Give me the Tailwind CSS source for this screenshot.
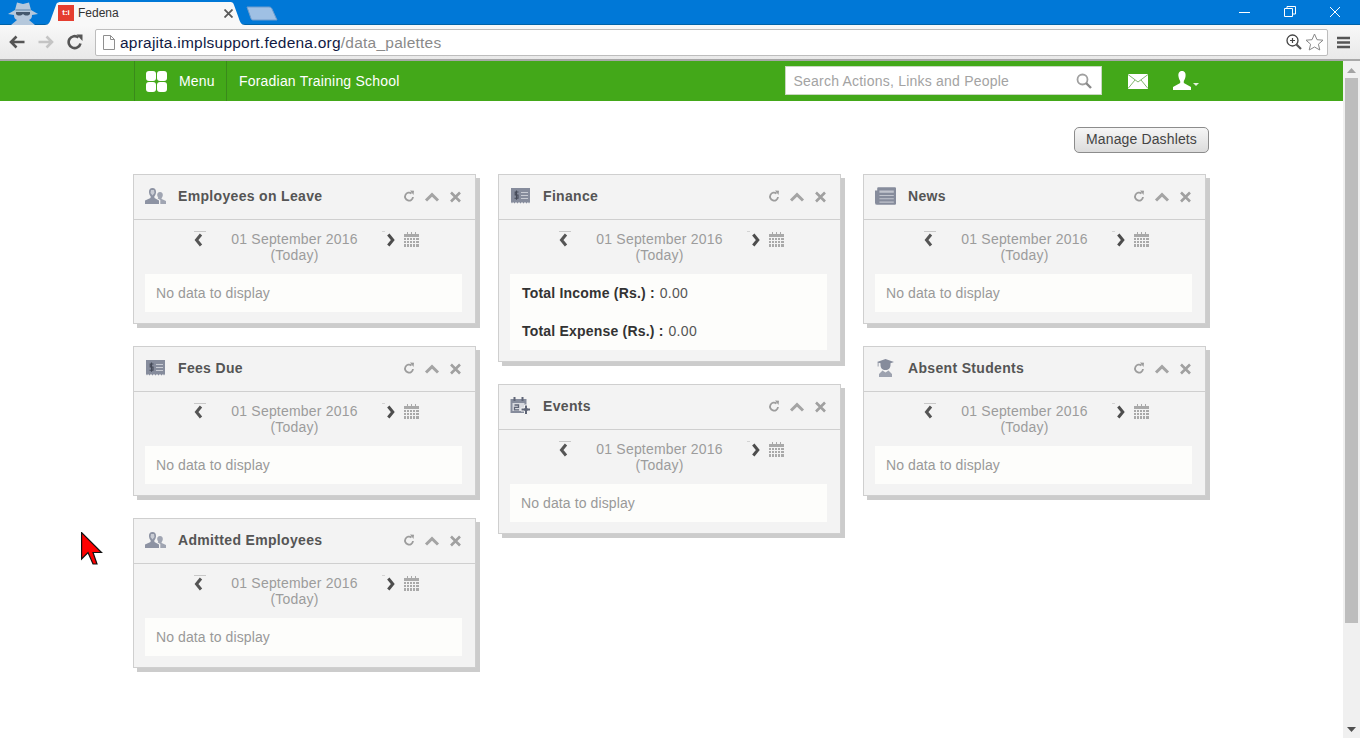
<!DOCTYPE html>
<html><head><meta charset="utf-8"><title>Fedena</title>
<script src="https://cdn.jsdelivr.net/npm/@tailwindcss/browser@4"></script></head>
<body class="h-[738px] w-[1360px] overflow-hidden bg-white font-['Liberation_Sans',Arial,sans-serif]">
<svg class="hidden"><defs>
<symbol id="people" viewBox="0 0 21 18"><path fill="#8d93a3" d="M7.500 1C10 1 11.300 3 11 5.500C10.800 7.500 10 8.700 9.300 9.500L9.500 11L14 13.500V17H0V13.500L5.500 11L5.700 9.500C5 8.700 4.200 7.500 4 5.500C3.700 3 5 1 7.500 1Z"/><path fill="#c9ccd4" d="M6 3H9L9.500 6L7.500 8.500L5.500 6Z"/><path fill="#a0a5b2" d="M15 5C17 5 18 6.500 17.800 8.300C17.700 9.700 17 10.600 16.500 11.200L16.700 12L21 14V17H15.300V13L12.700 11.500C13.300 10.600 13 10.800 13.200 10.500C12.700 9.800 12.300 9.200 12.200 8.300C12 6.500 13 5 15 5Z"/></symbol>
<symbol id="money" viewBox="0 0 19 18"><path fill="#868c9c" d="M0 1H19V15L18 16.500L17 15L15.500 16.500L14 15L12.500 16.500L11 15L9.500 16.500L8 15L6.500 16.500L5 15L3.500 16.500L2 15L1 16.500L0 15Z"/><path fill="#c8cbd3" d="M10 5H17V6H10ZM10 8H17V9H10ZM10 11H17V12H10Z"/><path fill="none" stroke="#454a58" stroke-width="1.100" d="M7.500 5H4.200V8H7V11.300H3.500M5.500 3.500V12.800"/></symbol>
<symbol id="events" viewBox="0 0 20 18"><path fill="#868c9c" d="M0 2H16V16H0Z"/><path fill="#d8dae0" d="M2 6H14V14H2Z"/><path fill="#5f6576" d="M3 0H5V4H3ZM11 0H13V4H11Z"/><path fill="none" stroke="#5f6576" stroke-width="1.300" d="M4 8H8V10.300H4V12.800H8.500"/><path fill="#5f6576" stroke="#f3f3f3" stroke-width="1" d="M14 8H17V11H20V14H17V17.500H14V14H10.500V11H14Z"/></symbol>
<symbol id="news" viewBox="0 0 19 16"><path fill="#868c9c" d="M2 1Q2 0 3 0H18Q19 0 19 1V15Q19 16 18 16H2Q0 16 0 14V3H2Z"/><path fill="#c1c4cd" d="M4 3H17V5H4ZM4 7H17V8H4ZM4 10H17V11H4ZM4 13H17V14H4Z"/></symbol>
<symbol id="student" viewBox="0 0 17 18"><path fill="#868c9c" d="M0 3L8.500 0L17 3L13.500 4.300V6C13.500 9 11.500 11 8.500 11C5.500 11 3.500 9 3.500 6V4.300L1.500 3.700V7.500H.7V3.300Z"/><path fill="#9da2af" d="M5.500 11.500L8.500 13.500L11.500 11.500L15 15V18H2V15Z"/></symbol>
<symbol id="card-tools" viewBox="0 0 58 14"><path fill="none" stroke="#9c9c9c" stroke-width="1.800" d="M8.500 3.500A4 4 0 1 0 10 7"/><path fill="#9c9c9c" d="M7 .5L11 .8L10.500 5Z"/><path fill="none" stroke="#a4a4a4" stroke-width="3" d="M23 10.500L29 4.700L35 10.500"/><path fill="none" stroke="#a0a0a0" stroke-width="2.600" d="M48 2.500L57 11.500M57 2.500L48 11.500"/></symbol>
<symbol id="prev" viewBox="0 0 12 18"><path fill="#c8c8c8" d="M0 0H12V1H0Z"/><path fill="none" stroke="#555" stroke-width="3" d="M7 3.500L2.500 9L7 14.500"/></symbol>
<symbol id="next" viewBox="0 0 14 18"><path fill="#d4d4d4" d="M0 0H3V1H0Z"/><path fill="none" stroke="#4d4d4d" stroke-width="3" d="M6.300 3.500L10.800 9L6.300 14.500"/></symbol>
<symbol id="cal" viewBox="0 0 15 15"><path fill="#a9a9a9" d="M0 2H15V15H0Z"/><path fill="#a9a9a9" d="M3 0H4V3H3ZM7 0H8V3H7ZM11 0H12V3H11Z"/><path fill="none" stroke="#f3f3f3" d="M0 5.500H15M0 8.500H15M0 11.500H15M2.500 5V15M5.500 5V15M8.500 5V15M11.500 5V15"/></symbol>
</defs></svg>

<div class="flex h-[25px] items-start bg-[#0078d7] border-b border-[#0063a9]">
  <svg class="mt-px ml-[5px] shrink-0" width="36" height="24" viewBox="0 0 36 24"><path fill="#b5c8dc" d="M10 9L12 1.500L18 3L24 1.500L26 9L33 13L27 14C27 17 26 18 24 19L30 24H6L12 19C10 18 9 17 9 14L3 13Z"/><path fill="#44586e" d="M11 11H25V13C23.500 15 20 15 18 13C16 15 12.500 15 11 13Z"/><path fill="#8aa5c0" d="M10 8H26L25.500 10H10.500Z"/></svg>
  <div class="relative ml-[4px] mt-px flex h-[23px] w-[200px] shrink-0 items-center">
    <svg class="absolute inset-0" width="200" height="24" viewBox="0 0 200 24"><path fill="#f8f8f8" d="M0 24C4 24 5 21 7 15L11 4C12 1 14 1 16 1H184C187 1 188 1 189 4L193 15C195 21 196 24 200 24Z"/></svg>
    <div class="relative ml-[13px] flex h-[16px] w-[16px] items-center justify-center bg-[#e53e30] text-[8px] font-bold leading-none text-white">t:i</div>
    <span class="relative ml-[4px] text-[12px] text-[#333]">Fedena</span>
    <svg class="absolute left-[179px] top-[8px]" width="9" height="9" viewBox="0 0 9 9"><path stroke="#5a5a5a" stroke-width="1.800" d="M.5 .5L8.500 8.500M8.500 .5L.5 8.500"/></svg>
  </div>
  <svg class="mt-[6px] ml-px shrink-0" width="32" height="15" viewBox="0 0 32 15"><path fill="#9fc0e4" stroke="#6f9ccc" d="M1 1H23C25 1 25.500 2 26 3L31 14H7C6 14 5.500 13.500 5 12.500Z"/></svg>
  <div class="ml-auto flex items-center">
    <svg width="13" height="24" viewBox="0 0 13 24" class="mr-[33px]"><path stroke="#fff" d="M1 12.500H12"/></svg>
    <svg width="12" height="24" viewBox="0 0 12 24" class="mr-[33px]"><path fill="none" stroke="#fff" d="M.5 8.500H8.500V16.500H.5ZM3 8V6.500H11.500V14H9"/></svg>
    <svg width="12" height="24" viewBox="0 0 12 24" class="mr-[19px]"><path stroke="#fff" d="M1 7L11 17M11 7L1 17"/></svg>
  </div>
</div>

<div class="flex h-[36px] items-center border-b-2 border-[#a8a8a8] bg-gradient-to-b from-[#f8f8f8] to-[#e9e9e9]">
  <svg class="ml-[9px] shrink-0" width="16" height="14" viewBox="0 0 16 14"><path fill="none" stroke="#555" stroke-width="2.600" d="M15.500 7H3M7.500 1.500L2 7L7.500 12.500"/></svg>
  <svg class="ml-[13px] shrink-0" width="16" height="14" viewBox="0 0 16 14"><path fill="none" stroke="#c4c4c4" stroke-width="2.600" d="M.5 7H13M8.500 1.500L14 7L8.500 12.500"/></svg>
  <svg class="ml-[13px] shrink-0" width="16" height="16" viewBox="0 0 16 16"><path fill="none" stroke="#555" stroke-width="2.600" d="M13.500 9.500A6 6 0 1 1 11.500 3.500"/><path fill="#555" d="M9.500 .5H15.500V7Z"/></svg>
  <div class="ml-[12px] flex h-[27px] w-[1233px] shrink-0 items-center rounded-[2px] border border-[#bdbdbd] bg-white">
    <svg class="ml-[7px] shrink-0" width="12" height="15" viewBox="0 0 12 15"><path fill="#fdfdfd" stroke="#8e8e8e" d="M.5 .5H7.500L11.500 4.500V14.500H.5ZM7.500 .5V4.500H11.500"/></svg>
    <span class="ml-[5px] pt-px text-[15.500px] tracking-[0.23px] text-[#111a44]">aprajita.implsupport.fedena.org<span class="text-[#8a8a8a]">/data_palettes</span></span>
    <div class="ml-auto flex items-center">
      <svg width="16" height="16" viewBox="0 0 16 16"><circle cx="6.500" cy="6.500" r="5.500" fill="none" stroke="#444" stroke-width="1.300"/><path stroke="#444" stroke-width="1.200" d="M4 6.500H9M6.500 4V9"/><path stroke="#555" stroke-width="2.200" d="M10.500 10.500L15 15"/></svg>
      <svg class="mx-[3px]" width="19" height="18" viewBox="0 0 19 18"><path fill="#fff" stroke="#888" d="M9.500 1L12 6.700L18 7.200L13.400 11.200L14.800 17L9.500 14L4.200 17L5.600 11.200L1 7.200L7 6.700Z"/></svg>
    </div>
  </div>
  <svg class="ml-[9px] shrink-0" width="13" height="13" viewBox="0 0 13 13"><path stroke="#555" stroke-width="2.400" d="M0 2H13M0 6.500H13M0 11H13"/></svg>
</div>

<div class="flex h-[677px]">
  <main class="w-[1343px] shrink-0">
    <header class="flex h-[40px] items-center bg-[#43a819] pl-[134px] text-[14px] text-white">
      <div class="flex h-full w-[93px] items-center border-x border-[#3a8a1b]">
        <div class="ml-[11px] mt-px grid grid-cols-2 gap-px">
          <i class="block h-[10px] w-[10px] rounded-[3px] bg-white"></i><i class="block h-[10px] w-[10px] rounded-[3px] bg-white"></i><i class="block h-[10px] w-[10px] rounded-[3px] bg-white"></i><i class="block h-[10px] w-[10px] rounded-[3px] bg-white"></i>
        </div>
        <span class="ml-[12px] tracking-[0.15px]">Menu</span>
      </div>
      <span class="ml-[12px] tracking-[0.2px]">Foradian Training School</span>
      <div class="ml-[386px] mb-px flex h-[29px] w-[317px] items-center justify-between border border-[#c9d8c0] bg-white pl-[7px] pr-[9px] text-[#a3a3a3]">
        <span class="pt-px tracking-[0.22px]">Search Actions, Links and People</span>
        <svg width="16" height="16" viewBox="0 0 16 16"><circle cx="6.500" cy="6.500" r="5" fill="none" stroke="#a0a0a0" stroke-width="1.800"/><path stroke="#8a8a8a" stroke-width="2.400" d="M10 10L15 15"/></svg>
      </div>
      <svg class="ml-[26px]" width="20" height="15" viewBox="0 0 20 15"><path fill="#fff" d="M0 0H20V15H0Z"/><path fill="none" stroke="#7fb56b" d="M0 .5L10 8L20 .5M0 14.500L7 6M20 14.500L13 6"/></svg>
      <svg class="ml-[25px]" width="27" height="20" viewBox="0 0 27 20"><path fill="#fff" d="M9 0C12 0 13 2.500 12.500 5.500C12.200 7.500 11.300 9 10.800 10V12L18 16V19H0V16L7.200 12V10C6.700 9 5.800 7.500 5.500 5.500C5 2.500 6 0 9 0Z"/><path fill="#e6f1df" d="M20 12H26L23 15Z"/></svg>
    </header>

    <div class="flex h-[73px] items-start justify-end pr-[134px] pt-[26px]">
      <button class="h-[26px] w-[135px] rounded-[5px] border border-[#8c8c8c] bg-gradient-to-b from-[#f6f6f6] to-[#dcdcdc] pb-[2px] text-[14px] tracking-[0.13px] text-[#444]">Manage Dashlets</button>
    </div>

    <div class="flex items-start gap-[22px] pl-[133px]">
      <div class="flex w-[343px] flex-col gap-[22px]">
        <section class="shadow-[4px_4px_0_#cccccc] border border-[#cfcfcf] bg-[#f3f3f3]">
          <div class="flex h-[45px] items-center border-b border-[#cfcfcf] pb-[2px] pl-[11px]"><svg width="21" height="18" class="mr-[12px]"><use href="#people"/></svg><h2 class="text-[14px] font-bold tracking-[0.33px] text-[#555]">Employees on Leave</h2><svg class="ml-auto mr-[14px] mt-[2px]" width="58" height="14"><use href="#card-tools"/></svg></div>
          <div class="flex h-[54px] items-start pl-[60px] pt-[11px]"><svg width="12" height="18"><use href="#prev"/></svg><div class="w-[176px] pl-px text-center text-[14px] leading-[16px] tracking-[0.2px] text-[#9c9c9c]">01 September 2016<br>(Today)</div><svg width="14" height="18"><use href="#next"/></svg><svg class="ml-[8px] mt-px" width="15" height="15"><use href="#cal"/></svg></div>
          <div class="ml-[11px] mr-[13px] mb-[11px] h-[38px] bg-[#fdfdfb] px-[11px] text-[14px] leading-[38px] tracking-[0.1px] text-[#999]">No data to display</div>
        </section>
        <section class="shadow-[4px_4px_0_#cccccc] border border-[#cfcfcf] bg-[#f3f3f3]">
          <div class="flex h-[45px] items-center border-b border-[#cfcfcf] pb-[2px] pl-[11px]"><svg width="21" height="18" class="mr-[12px]"><use href="#money"/></svg><h2 class="text-[14px] font-bold tracking-[0.33px] text-[#555]">Fees Due</h2><svg class="ml-auto mr-[14px] mt-[2px]" width="58" height="14"><use href="#card-tools"/></svg></div>
          <div class="flex h-[54px] items-start pl-[60px] pt-[11px]"><svg width="12" height="18"><use href="#prev"/></svg><div class="w-[176px] pl-px text-center text-[14px] leading-[16px] tracking-[0.2px] text-[#9c9c9c]">01 September 2016<br>(Today)</div><svg width="14" height="18"><use href="#next"/></svg><svg class="ml-[8px] mt-px" width="15" height="15"><use href="#cal"/></svg></div>
          <div class="ml-[11px] mr-[13px] mb-[11px] h-[38px] bg-[#fdfdfb] px-[11px] text-[14px] leading-[38px] tracking-[0.1px] text-[#999]">No data to display</div>
        </section>
        <section class="shadow-[4px_4px_0_#cccccc] border border-[#cfcfcf] bg-[#f3f3f3]">
          <div class="flex h-[45px] items-center border-b border-[#cfcfcf] pb-[2px] pl-[11px]"><svg width="21" height="18" class="mr-[12px]"><use href="#people"/></svg><h2 class="text-[14px] font-bold tracking-[0.33px] text-[#555]">Admitted Employees</h2><svg class="ml-auto mr-[14px] mt-[2px]" width="58" height="14"><use href="#card-tools"/></svg></div>
          <div class="flex h-[54px] items-start pl-[60px] pt-[11px]"><svg width="12" height="18"><use href="#prev"/></svg><div class="w-[176px] pl-px text-center text-[14px] leading-[16px] tracking-[0.2px] text-[#9c9c9c]">01 September 2016<br>(Today)</div><svg width="14" height="18"><use href="#next"/></svg><svg class="ml-[8px] mt-px" width="15" height="15"><use href="#cal"/></svg></div>
          <div class="ml-[11px] mr-[13px] mb-[11px] h-[38px] bg-[#fdfdfb] px-[11px] text-[14px] leading-[38px] tracking-[0.1px] text-[#999]">No data to display</div>
        </section>
      </div>

      <div class="flex w-[343px] flex-col gap-[22px]">
        <section class="shadow-[4px_4px_0_#cccccc] border border-[#cfcfcf] bg-[#f3f3f3]">
          <div class="flex h-[45px] items-center border-b border-[#cfcfcf] pb-[2px] pl-[11px]"><svg width="21" height="18" class="mr-[12px]"><use href="#money"/></svg><h2 class="text-[14px] font-bold tracking-[0.33px] text-[#555]">Finance</h2><svg class="ml-auto mr-[14px] mt-[2px]" width="58" height="14"><use href="#card-tools"/></svg></div>
          <div class="flex h-[54px] items-start pl-[60px] pt-[11px]"><svg width="12" height="18"><use href="#prev"/></svg><div class="w-[176px] pl-px text-center text-[14px] leading-[16px] tracking-[0.2px] text-[#9c9c9c]">01 September 2016<br>(Today)</div><svg width="14" height="18"><use href="#next"/></svg><svg class="ml-[8px] mt-px" width="15" height="15"><use href="#cal"/></svg></div>
          <div class="ml-[11px] mr-[13px] mb-[11px] bg-[#fdfdfb] px-[12px] text-[14px] leading-[38px] text-[#555]">
            <p><b class="tracking-[0.2px] text-[#333]">Total Income (Rs.) :</b> <span class="ml-px tracking-[0.3px]">0.00</span></p>
            <p><b class="tracking-[0.2px] text-[#333]">Total Expense (Rs.) :</b> <span class="ml-px tracking-[0.3px]">0.00</span></p>
          </div>
        </section>
        <section class="shadow-[4px_4px_0_#cccccc] border border-[#cfcfcf] bg-[#f3f3f3]">
          <div class="flex h-[45px] items-center border-b border-[#cfcfcf] pb-[2px] pl-[11px]"><svg width="21" height="18" class="mr-[12px]"><use href="#events"/></svg><h2 class="text-[14px] font-bold tracking-[0.33px] text-[#555]">Events</h2><svg class="ml-auto mr-[14px] mt-[2px]" width="58" height="14"><use href="#card-tools"/></svg></div>
          <div class="flex h-[54px] items-start pl-[60px] pt-[11px]"><svg width="12" height="18"><use href="#prev"/></svg><div class="w-[176px] pl-px text-center text-[14px] leading-[16px] tracking-[0.2px] text-[#9c9c9c]">01 September 2016<br>(Today)</div><svg width="14" height="18"><use href="#next"/></svg><svg class="ml-[8px] mt-px" width="15" height="15"><use href="#cal"/></svg></div>
          <div class="ml-[11px] mr-[13px] mb-[11px] h-[38px] bg-[#fdfdfb] px-[11px] text-[14px] leading-[38px] tracking-[0.1px] text-[#999]">No data to display</div>
        </section>
      </div>

      <div class="flex w-[343px] flex-col gap-[22px]">
        <section class="shadow-[4px_4px_0_#cccccc] border border-[#cfcfcf] bg-[#f3f3f3]">
          <div class="flex h-[45px] items-center border-b border-[#cfcfcf] pb-[2px] pl-[11px]"><svg width="21" height="18" class="mr-[12px]"><use href="#news"/></svg><h2 class="text-[14px] font-bold tracking-[0.33px] text-[#555]">News</h2><svg class="ml-auto mr-[14px] mt-[2px]" width="58" height="14"><use href="#card-tools"/></svg></div>
          <div class="flex h-[54px] items-start pl-[60px] pt-[11px]"><svg width="12" height="18"><use href="#prev"/></svg><div class="w-[176px] pl-px text-center text-[14px] leading-[16px] tracking-[0.2px] text-[#9c9c9c]">01 September 2016<br>(Today)</div><svg width="14" height="18"><use href="#next"/></svg><svg class="ml-[8px] mt-px" width="15" height="15"><use href="#cal"/></svg></div>
          <div class="ml-[11px] mr-[13px] mb-[11px] h-[38px] bg-[#fdfdfb] px-[11px] text-[14px] leading-[38px] tracking-[0.1px] text-[#999]">No data to display</div>
        </section>
        <section class="shadow-[4px_4px_0_#cccccc] border border-[#cfcfcf] bg-[#f3f3f3]">
          <div class="flex h-[45px] items-center border-b border-[#cfcfcf] pb-[2px] pl-[11px]"><svg width="21" height="18" class="mr-[12px]"><use href="#student"/></svg><h2 class="text-[14px] font-bold tracking-[0.33px] text-[#555]">Absent Students</h2><svg class="ml-auto mr-[14px] mt-[2px]" width="58" height="14"><use href="#card-tools"/></svg></div>
          <div class="flex h-[54px] items-start pl-[60px] pt-[11px]"><svg width="12" height="18"><use href="#prev"/></svg><div class="w-[176px] pl-px text-center text-[14px] leading-[16px] tracking-[0.2px] text-[#9c9c9c]">01 September 2016<br>(Today)</div><svg width="14" height="18"><use href="#next"/></svg><svg class="ml-[8px] mt-px" width="15" height="15"><use href="#cal"/></svg></div>
          <div class="ml-[11px] mr-[13px] mb-[11px] h-[38px] bg-[#fdfdfb] px-[11px] text-[14px] leading-[38px] tracking-[0.1px] text-[#999]">No data to display</div>
        </section>
      </div>
    </div>
  </main>
  <aside class="flex w-[17px] flex-col items-center bg-[#f0f0f0]">
    <svg class="mt-[7px]" width="9" height="5" viewBox="0 0 9 5"><path fill="#a3a3a3" d="M4.500 0L9 5H0Z"/></svg>
    <div class="mt-[5px] h-[545px] w-[13px] bg-[#bdbdbd]"></div>
    <svg class="mt-[104px]" width="9" height="5" viewBox="0 0 9 5"><path fill="#505050" d="M0 0H9L4.500 5Z"/></svg>
  </aside>
</div>

<svg class="absolute left-[81px] top-[532px]" width="22" height="33" viewBox="0 0 22 33"><path fill="#f00" stroke="#111" stroke-width="1.200" d="M.6 .6V27L7 20.500L12 32H16L12 20.500H20.500Z"/></svg>
</body></html>
